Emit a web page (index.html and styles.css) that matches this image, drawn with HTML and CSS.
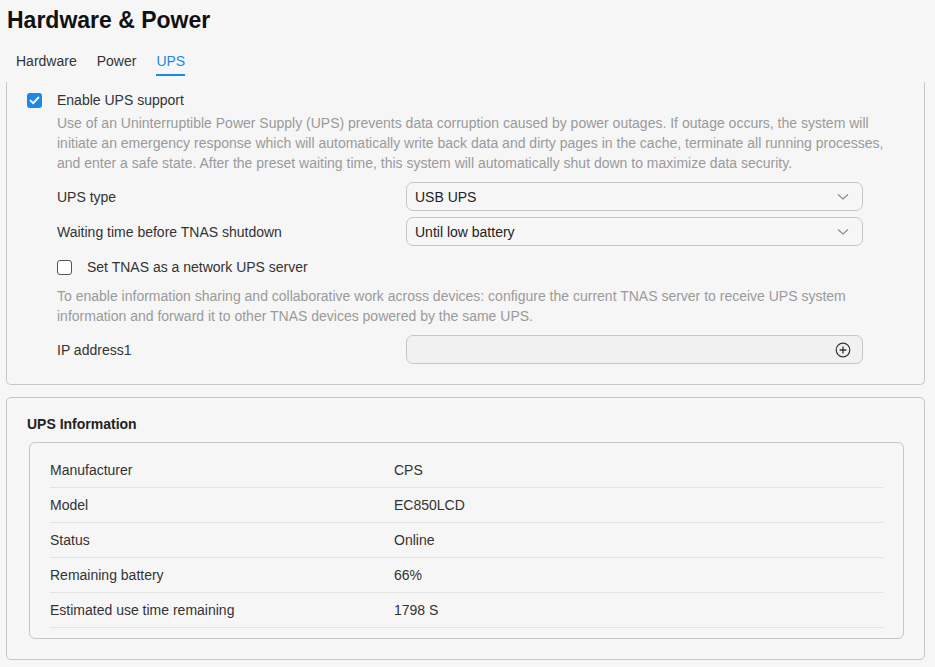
FILE: index.html
```html
<!DOCTYPE html>
<html>
<head>
<meta charset="utf-8">
<link rel="stylesheet" href="styles.css">
</head>
<body>
<div class="page">
  <h1 class="title">Hardware &amp; Power</h1>
  <nav class="tabs">
    <span class="tab">Hardware</span>
    <span class="tab">Power</span>
    <span class="tab active">UPS</span>
  </nav>

  <section class="card settings">
    <label class="check-row">
      <span class="cbox checked"><svg viewBox="0 0 15 15" width="15" height="15"><path d="M3.6 7.6 L6.3 10.2 L11.4 4.6" fill="none" stroke="#fff" stroke-width="2" stroke-linecap="round" stroke-linejoin="round"/></svg></span>
      <span class="check-label">Enable UPS support</span>
    </label>
    <div class="indent">
      <p class="desc">Use of an Uninterruptible Power Supply (UPS) prevents data corruption caused by power outages. If outage occurs, the system will initiate an emergency response which will automatically write back data and dirty pages in the cache, terminate all running processes, and enter a safe state. After the preset waiting time, this system will automatically shut down to maximize data security.</p>

      <div class="form-row first">
        <span class="label">UPS type</span>
        <div class="field">
          <span>USB UPS</span>
          <svg class="chev" viewBox="0 0 12 8" width="12" height="8"><path d="M1 1.5 L6 6 L11 1.5" fill="none" stroke="#8a8a8a" stroke-width="1.1"/></svg>
        </div>
      </div>
      <div class="form-row second">
        <span class="label">Waiting time before TNAS shutdown</span>
        <div class="field">
          <span>Until low battery</span>
          <svg class="chev" viewBox="0 0 12 8" width="12" height="8"><path d="M1 1.5 L6 6 L11 1.5" fill="none" stroke="#8a8a8a" stroke-width="1.1"/></svg>
        </div>
      </div>

      <label class="check-row sub">
        <span class="cbox"></span>
        <span class="check-label">Set TNAS as a network UPS server</span>
      </label>
      <p class="desc desc2">To enable information sharing and collaborative work across devices: configure the current TNAS server to receive UPS system information and forward it to other TNAS devices powered by the same UPS.</p>

      <div class="form-row ip">
        <span class="label">IP address1</span>
        <div class="field empty">
          <span></span>
          <svg class="plus" viewBox="0 0 16 16" width="16" height="16"><circle cx="8" cy="8" r="6.8" fill="none" stroke="#333" stroke-width="1.2"/><path d="M8 4.6 V11.4 M4.6 8 H11.4" stroke="#333" stroke-width="1.3"/></svg>
        </div>
      </div>
    </div>
  </section>

  <section class="card info">
    <h2 class="info-title">UPS Information</h2>
    <div class="info-box">
      <div class="info-row"><span class="k">Manufacturer</span><span class="v">CPS</span></div>
      <div class="info-row"><span class="k">Model</span><span class="v">EC850LCD</span></div>
      <div class="info-row"><span class="k">Status</span><span class="v">Online</span></div>
      <div class="info-row"><span class="k">Remaining battery</span><span class="v">66%</span></div>
      <div class="info-row"><span class="k">Estimated use time remaining</span><span class="v">1798 S</span></div>
    </div>
  </section>
</div>
</body>
</html>
```

FILE: styles.css
```css
* { box-sizing: border-box; }
html, body {
  margin: 0;
  padding: 0;
  background: #f6f6f6;
}
body {
  font-family: "Liberation Sans", Arial, sans-serif;
  font-size: 14px;
  color: #333;
  width: 935px;
  height: 667px;
  overflow: hidden;
}
.page {
  padding: 6px 0 0 0;
}
.title {
  margin: 0 0 0 7px;
  font-size: 23px;
  line-height: 28px;
  font-weight: bold;
  color: #111;
}
.tabs {
  display: flex;
  gap: 20px;
  margin: 17px 0 0 16px;
}
.tab {
  line-height: 20px;
  padding-bottom: 3px;
  border-bottom: 2px solid transparent;
  color: #333;
}
.tab.active {
  color: #1a88e6;
  border-bottom-color: #1a88e6;
}
.card {
  margin-left: 6px;
  width: 919px;
  border: 1px solid #c6c6c6;
  border-radius: 5px;
  background: #f6f6f6;
}
.settings {
  margin-top: 6px;
  border-top: none;
  border-top-left-radius: 0;
  border-top-right-radius: 0;
  padding: 8px 20px 20px 20px;
}
.check-row {
  display: flex;
  align-items: center;
  gap: 15px;
  height: 20px;
}
.cbox {
  width: 15px;
  height: 15px;
  border-radius: 3px;
  border: 1px solid #555;
  background: #fff;
  display: flex;
  align-items: center;
  justify-content: center;
  flex: none;
}
.cbox.checked {
  border: none;
  background: #1a88e6;
}
.cbox svg { display: block; }
.check-label {
  color: #333;
  line-height: 20px;
}
.indent {
  margin-left: 30px;
}
.desc {
  margin: 3px 0 0 0;
  line-height: 20px;
  color: #9a9a9a;
  width: 840px;
}
.form-row {
  display: grid;
  grid-template-columns: 349px 457px;
  align-items: center;
}
.form-row.first { margin-top: 9px; }
.form-row.second { margin-top: 6px; }
.form-row.ip { margin-top: 9px; }
.label { color: #333; }
.field {
  height: 29px;
  border: 1px solid #c6c6c6;
  border-radius: 7px;
  display: flex;
  align-items: center;
  justify-content: space-between;
  padding: 0 12px 0 8px;
  color: #222;
  background: #f6f6f6;
}
.field.empty {
  background: #f1f1f1;
  padding-right: 11px;
}
.chev { display: block; margin-right: 1px; }
.plus { display: block; }
.check-row.sub {
  margin-top: 11px;
}
.desc2 {
  margin-top: 9px;
}
.info {
  margin-top: 12px;
  padding: 16px 20px 20px 20px;
}
.info-title {
  margin: 0;
  font-size: 14px;
  line-height: 20px;
  font-weight: bold;
  color: #222;
}
.info-box {
  margin: 8px 0 0 2px;
  width: 875px;
  border: 1px solid #c6c6c6;
  border-radius: 6px;
  padding: 10px 20px 10px 20px;
}
.info-row {
  display: grid;
  grid-template-columns: 344px 1fr;
  align-items: center;
  height: 35px;
  border-bottom: 1px solid #e3e3e3;
  color: #333;
}
.info-row .v { color: #333; }
```
